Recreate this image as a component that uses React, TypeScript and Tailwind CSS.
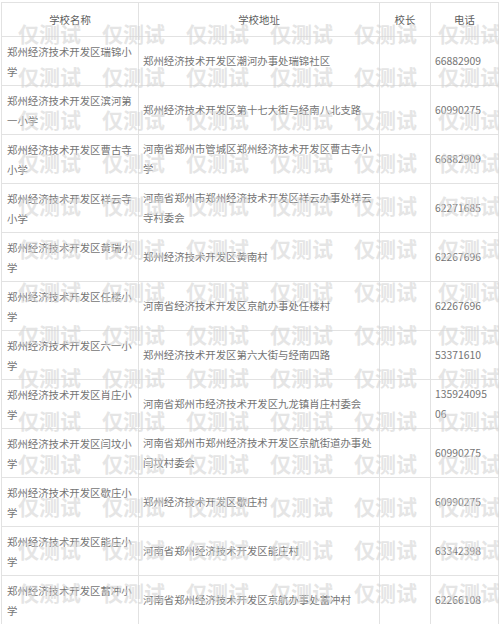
import React from 'react';

type School = {
  name: string;
  address: string;
  head: string;
  phone: string;
};

const schools: School[] = [
  { name: '郑州经济技术开发区瑞锦小学', address: '郑州经济技术开发区潮河办事处瑞锦社区', head: '', phone: '66882909' },
  { name: '郑州经济技术开发区滨河第一小学', address: '郑州经济技术开发区第十七大街与经南八北支路', head: '', phone: '60990275' },
  { name: '郑州经济技术开发区曹古寺小学', address: '河南省郑州市管城区郑州经济技术开发区曹古寺小学', head: '', phone: '66882909' },
  { name: '郑州经济技术开发区祥云寺小学', address: '河南省郑州市郑州经济技术开发区祥云办事处祥云寺村委会', head: '', phone: '62271685' },
  { name: '郑州经济技术开发区黄瑞小学', address: '郑州经济技术开发区黄南村', head: '', phone: '62267696' },
  { name: '郑州经济技术开发区任楼小学', address: '河南省经济技术开发区京航办事处任楼村', head: '', phone: '62267696' },
  { name: '郑州经济技术开发区六一小学', address: '郑州经济技术开发区第六大街与经南四路', head: '', phone: '53371610' },
  { name: '郑州经济技术开发区肖庄小学', address: '河南省郑州市经济技术开发区九龙镇肖庄村委会', head: '', phone: '13592409506' },
  { name: '郑州经济技术开发区闫坟小学', address: '河南省郑州市郑州经济技术开发区京航街道办事处闫坟村委会', head: '', phone: '60990275' },
  { name: '郑州经济技术开发区歇庄小学', address: '郑州经济技术开发区歇庄村', head: '', phone: '60990275' },
  { name: '郑州经济技术开发区能庄小学', address: '河南省郑州经济技术开发区能庄村', head: '', phone: '63342398' },
  { name: '郑州经济技术开发区蓄冲小学', address: '河南省郑州经济技术开发区京航办事处蓄冲村', head: '', phone: '62266108' },
];

// 6 x 14 watermark tiles laid over the table
const marks = Array.from({ length: 84 }, (_, i) => i);

export default function App() {
  return (
    <div
      className="relative w-[499px] h-[624px] overflow-hidden bg-white text-[#747474] text-[10.4px] leading-[20px]"
      style={{ fontFamily: '"Noto Sans CJK SC", "Noto Sans", sans-serif' }}
    >
      <table className="mt-[2px] ml-[1px] w-[497px] table-fixed border-collapse border border-[#e2e2e2]">
        <colgroup>
          <col className="w-[137px]" />
          <col className="w-[241px]" />
          <col className="w-[51px]" />
          <col className="w-[68px]" />
        </colgroup>
        <thead>
          <tr className="h-[34px] text-[#5e5e5e]">
            <th className="border border-[#e2e2e2] font-normal text-center align-middle">学校名称</th>
            <th className="border border-[#e2e2e2] font-normal text-center align-middle">学校地址</th>
            <th className="border border-[#e2e2e2] font-normal text-center align-middle">校长</th>
            <th className="border border-[#e2e2e2] font-normal text-center align-middle">电话</th>
          </tr>
        </thead>
        <tbody>
          {schools.map((s, i) => (
            <tr key={i} className="h-[49px]">
              <td className="border border-[#e2e2e2] pl-[5px] pr-[5px] pt-[2px] align-middle">{s.name}</td>
              <td className="border border-[#e2e2e2] px-[4px] align-middle">{s.address}</td>
              <td className="border border-[#e2e2e2] px-[4px] align-middle">{s.head}</td>
              <td className="border border-[#e2e2e2] pl-[4px] pr-[10px] align-middle break-all">{s.phone}</td>
            </tr>
          ))}
        </tbody>
      </table>

      <div className="pointer-events-none absolute inset-0 pl-[18px] pt-[12px]">
        <div className="grid grid-cols-[repeat(6,84px)] auto-rows-[43px]">
          {marks.map((m) => (
            <div
              key={m}
              className="whitespace-nowrap text-[21px] leading-[43px] font-bold text-[#d4d4d4]/60"
            >
              仅测试
            </div>
          ))}
        </div>
      </div>
    </div>
  );
}
